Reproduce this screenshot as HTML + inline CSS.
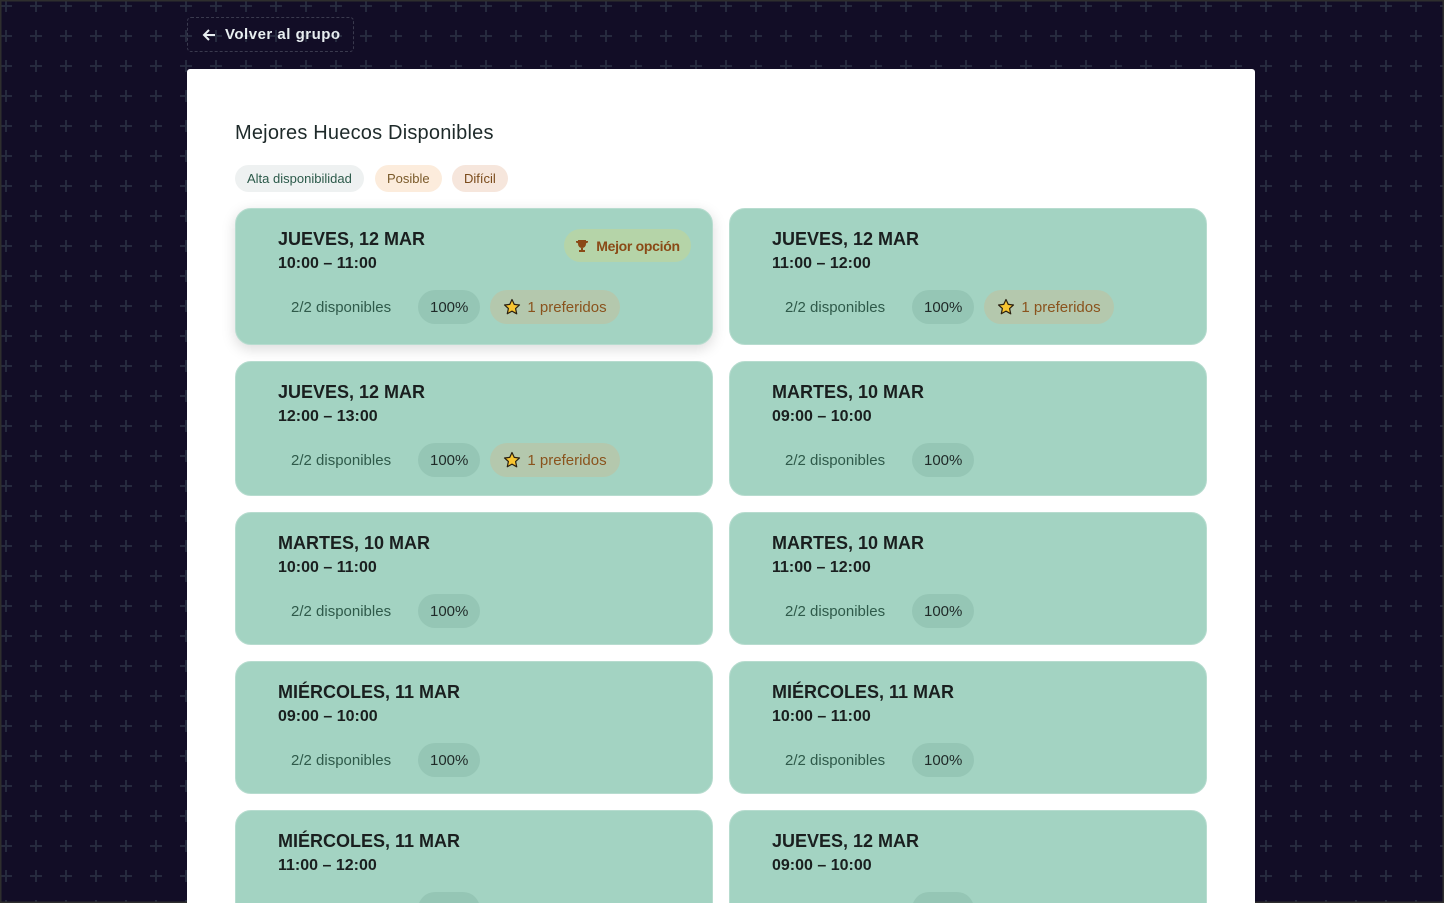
<!DOCTYPE html>
<html><head><meta charset="utf-8">
<style>
*{box-sizing:border-box;margin:0;padding:0}
html,body{width:1444px;height:903px;overflow:hidden}
body{font-family:"Liberation Sans",sans-serif;background:#120d26;position:relative}
.bg2{position:absolute;inset:0;}
.back{position:absolute;left:187px;top:17px;width:167px;height:35px;border:1px dashed #3a3a4e;border-radius:4px;color:#e8eef0;font-weight:bold;font-size:15px;letter-spacing:.5px;display:flex;align-items:center;padding-left:14px;gap:8px}
.panel{position:absolute;left:187px;top:69px;width:1068px;height:840px;background:#fff;border-radius:3px}
h1{position:absolute;left:48px;top:53px;font-size:20px;font-weight:normal;color:#1e2a2a;letter-spacing:.2px}
.tag{position:absolute;top:96px;height:27px;border-radius:14px;font-size:13px;display:flex;align-items:center;padding:0 12px}
.card{position:absolute;width:478px;background:#a3d3c2;border-radius:16px;border:1px solid #b7dccf}
.d{position:absolute;left:42px;top:20px;font-size:18px;font-weight:bold;color:#1a1f1f}
.t{position:absolute;left:42px;top:46px;font-size:16px;font-weight:bold;color:#1a1f1f}
.row{position:absolute;left:55px;top:81px;display:flex;align-items:center;font-size:15px}
.av{color:#2f5a4a;width:127px}
.p{background:#95c6b5;height:34px;border-radius:17px;padding:0 12px;display:flex;align-items:center;color:#1f2a28;margin-right:10px}
.pr{background:#b4c8ad;height:34px;border-radius:17px;padding:0 13px;display:flex;align-items:center;color:#8a531d;gap:6px}
.best{position:absolute;left:328px;top:20px;width:127px;height:33px;border-radius:17px;background:#b5d4a8;color:#8a4a16;font-weight:bold;font-size:14px;display:flex;align-items:center;justify-content:center;gap:7px;letter-spacing:-.3px}
</style></head><body>
<svg class="bg2" width="1444" height="903" style="position:absolute;left:0;top:0">
<defs><pattern id="pl" x="-9" y="-9" width="30" height="30" patternUnits="userSpaceOnUse">
<rect x="14" y="9" width="2" height="12" fill="#262a3e"/><rect x="9" y="14" width="12" height="2" fill="#262a3e"/></pattern></defs>
<rect width="1444" height="903" fill="#120d26"/><rect width="1444" height="903" fill="url(#pl)"/>
<rect x="0.5" y="0.5" width="1443" height="902" fill="none" stroke="#2e2e2e" stroke-width="2"/>
</svg>
<div class="back"><svg width="15" height="14" viewBox="0 0 15 14"><path d="M13 7H2M7 2L2 7l5 5" stroke="#e8eef0" stroke-width="2" fill="none"/></svg>Volver al grupo</div>
<div class="panel">
<h1>Mejores Huecos Disponibles</h1>
<div class="tag" style="left:48px;background:#eef1f1;color:#2c5a4a">Alta disponibilidad</div>
<div class="tag" style="left:188px;background:#fcecdc;color:#7a5a2a">Posible</div>
<div class="tag" style="left:265px;background:#f6e6dc;color:#7a4a1a">Difícil</div>
</div>
<div id="cards"></div>
<script>
const data=[
["JUEVES, 12 MAR","10:00 – 11:00",1,1],["JUEVES, 12 MAR","11:00 – 12:00",1,0],
["JUEVES, 12 MAR","12:00 – 13:00",1,0],["MARTES, 10 MAR","09:00 – 10:00",0,0],
["MARTES, 10 MAR","10:00 – 11:00",0,0],["MARTES, 10 MAR","11:00 – 12:00",0,0],
["MIÉRCOLES, 11 MAR","09:00 – 10:00",0,0],["MIÉRCOLES, 11 MAR","10:00 – 11:00",0,0],
["MIÉRCOLES, 11 MAR","11:00 – 12:00",0,0],["JUEVES, 12 MAR","09:00 – 10:00",0,0]];
const tops=[208,361,512,661,810],hs=[137,135,133,133,140];
const star='<svg width="18" height="18" viewBox="0 0 24 24"><path d="M12 2l3 6.5 7 .8-5.2 4.8 1.5 7L12 17.5 5.7 21l1.5-7L2 9.3l7-.8z" fill="#f7c531" stroke="#2a2010" stroke-width="1.6" stroke-linejoin="round"/></svg>';
const trophy='<svg width="14" height="14" viewBox="0 0 14 14"><path d="M3 1h8v4a4 4 0 0 1-8 0zM1 2h2v2a1.5 1.5 0 0 1-2-1zM13 2h-2v2a1.5 1.5 0 0 0 2-1zM6 9h2v2h2v2H4v-2h2z" fill="#8a4a16"/></svg>';
let h='';
data.forEach((d,i)=>{const r=Math.floor(i/2),c=i%2;
h+=`<div class="card" style="left:${c?729:235}px;top:${tops[r]}px;height:${hs[r]}px;${i==0?'box-shadow:0 4px 14px rgba(0,0,0,.15);':''}">
<div class="d">${d[0]}</div><div class="t">${d[1]}</div>
<div class="row"><span class="av">2/2 disponibles</span><span class="p">100%</span>${d[2]?`<span class="pr">${star}1 preferidos</span>`:''}</div>
${d[3]?`<div class="best">${trophy}Mejor opción</div>`:''}</div>`;});
document.getElementById('cards').innerHTML=h;
</script>
</body></html>
